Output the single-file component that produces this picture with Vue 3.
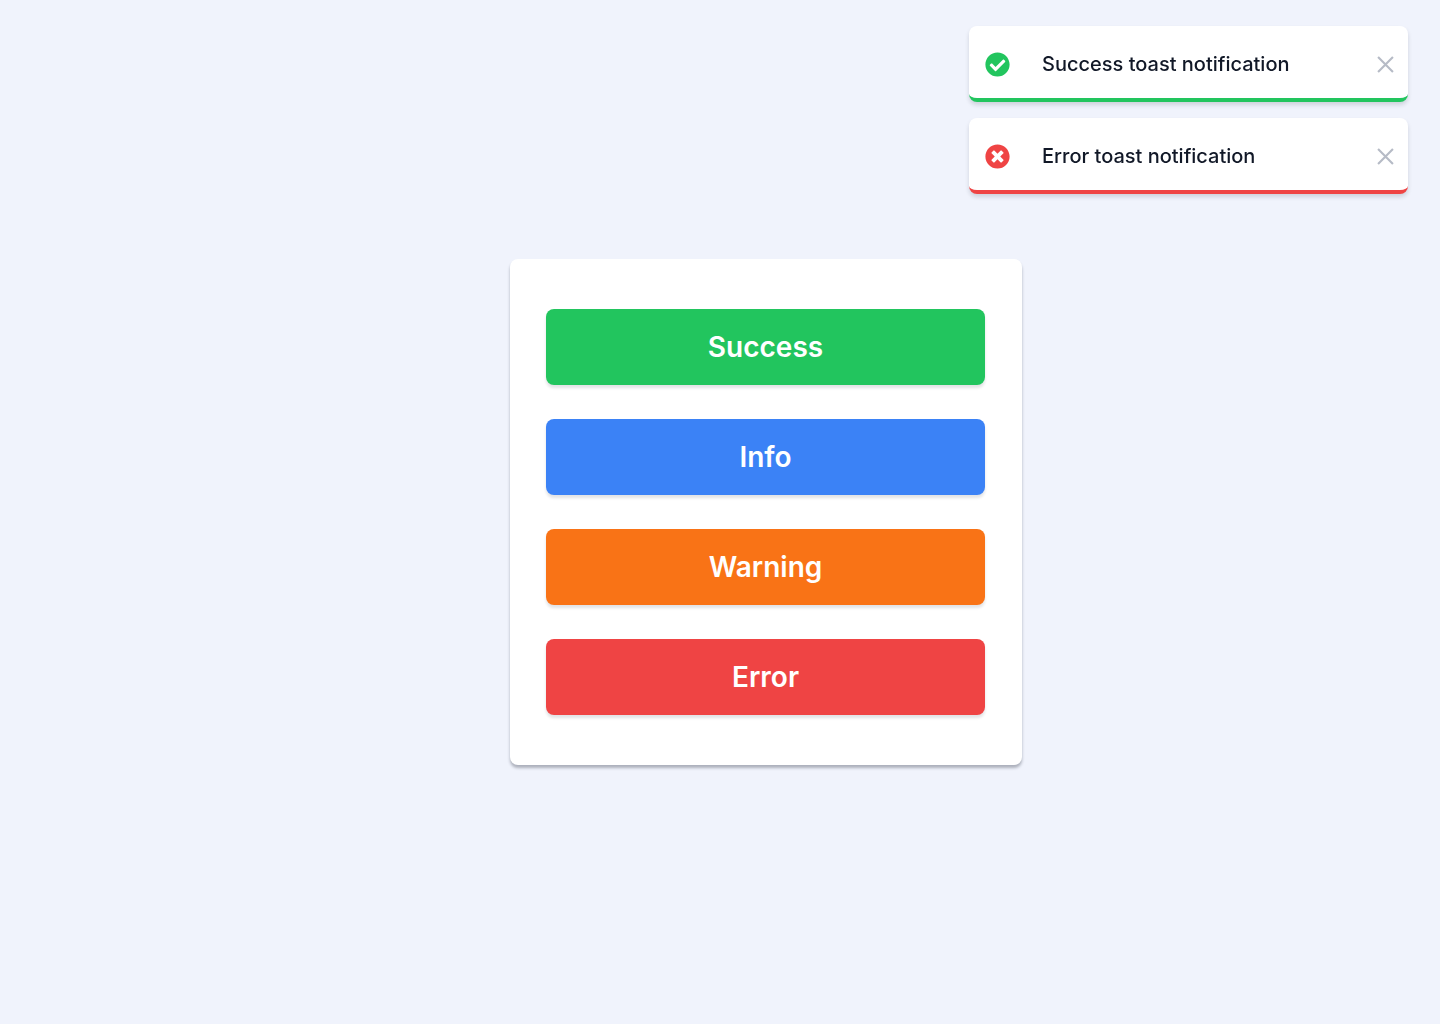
<script setup>
import { ref } from 'vue'

const types = [
  { id: 'success', label: 'Success' },
  { id: 'info', label: 'Info' },
  { id: 'warning', label: 'Warning' },
  { id: 'error', label: 'Error' },
]

let nextId = 3
const toasts = ref([
  { id: 1, type: 'success', text: 'Success toast notification' },
  { id: 2, type: 'error', text: 'Error toast notification' },
])

function addToast(type) {
  toasts.value.push({ id: nextId++, type: type.id, text: `${type.label} toast notification` })
}

function removeToast(id) {
  toasts.value = toasts.value.filter((toast) => toast.id !== id)
}
</script>

<template>
  <main class="page">
    <section class="panel">
      <button
        v-for="type in types"
        :key="type.id"
        type="button"
        class="trigger"
        :class="type.id"
        @click="addToast(type)"
      >
        {{ type.label }}
      </button>
    </section>

    <div class="toasts" role="status">
      <div v-for="toast in toasts" :key="toast.id" class="toast" :class="toast.type">
        <div class="toast-body">
          <svg class="icon" viewBox="0 0 512 512" aria-hidden="true">
            <path
              v-if="toast.type === 'success'"
              d="M504 256c0 136.967-111.033 248-248 248S8 392.967 8 256 119.033 8 256 8s248 111.033 248 248zM227.314 387.314l184-184c6.248-6.248 6.248-16.379 0-22.627l-22.627-22.627c-6.248-6.249-16.379-6.249-22.628 0L216 308.118l-70.059-70.059c-6.248-6.248-16.379-6.248-22.628 0l-22.627 22.627c-6.248 6.248-6.248 16.379 0 22.627l104 104c6.249 6.249 16.379 6.249 22.628.001z"
            />
            <path
              v-else-if="toast.type === 'error'"
              d="M256 8C119 8 8 119 8 256s111 248 248 248 248-111 248-248S393 8 256 8zm121.600 313.100c4.700 4.700 4.700 12.300 0 17L338 377.600c-4.700 4.700-12.300 4.700-17 0L256 312l-65.100 65.600c-4.700 4.700-12.300 4.700-17 0L134.400 338c-4.700-4.700-4.700-12.300 0-17l65.600-65-65.600-65.100c-4.700-4.700-4.700-12.300 0-17l39.600-39.600c4.700-4.700 12.300-4.700 17 0l65 65.700 65.100-65.600c4.700-4.700 12.300-4.700 17 0l39.600 39.600c4.700 4.700 4.700 12.300 0 17L312 256l65.600 65.100z"
            />
            <circle v-else cx="256" cy="256" r="248" />
          </svg>
          <p class="message">{{ toast.text }}</p>
          <button type="button" class="close" aria-label="Dismiss" @click="removeToast(toast.id)">
            <svg viewBox="0 0 16 16" aria-hidden="true">
              <path d="M1 1L15 15M15 1L1 15" />
            </svg>
          </button>
        </div>
      </div>
    </div>
  </main>
</template>

<style>
body {
  margin: 0;
  background: #f0f3fc;
}
</style>

<style scoped>
.page {
  min-height: 100vh;
  box-sizing: border-box;
  padding: 24px 0 24px 92px;
  display: flex;
  align-items: center;
  justify-content: center;
  font-family: Inter, sans-serif;
}

.panel {
  box-sizing: border-box;
  width: 512px;
  max-width: 100%;
  padding: 50px 37px 50px 36px;
  display: flex;
  flex-direction: column;
  gap: 34px;
  background: #fff;
  border-radius: 8px;
  box-shadow: 0 3px 3px rgba(17, 24, 39, 0.3);
}

.trigger {
  height: 76px;
  padding: 0 16px;
  border: 0;
  border-radius: 8px;
  color: #fff;
  font: 600 28px/36px Inter, sans-serif;
  cursor: pointer;
  box-shadow: 0 3px 3px rgba(17, 24, 39, 0.12);
}

.trigger.success { background: #22c55e; }
.trigger.info { background: #3b82f6; }
.trigger.warning { background: #f97316; }
.trigger.error { background: #ef4444; }

.toasts {
  position: fixed;
  top: 26px;
  right: 32px;
  width: 439px;
  max-width: calc(100% - 64px);
  display: flex;
  flex-direction: column;
  gap: 16px;
}

.toast {
  --tone: #3b82f6;
  background: #fff;
  border-bottom: 4px solid var(--tone);
  border-radius: 8px;
  box-shadow: 0 3px 4px rgba(17, 24, 39, 0.15);
}

.toast.success { --tone: #22c55e; }
.toast.warning { --tone: #f97316; }
.toast.error { --tone: #ef4444; }

.toast-body {
  height: 72px;
  box-sizing: border-box;
  padding: 4px 14px 0 16px;
  display: flex;
  align-items: center;
}

.icon {
  width: 25px;
  height: 25px;
  flex: none;
  fill: var(--tone);
}

.message {
  flex: 1;
  margin: 0 16px 0 32px;
  color: #111827;
  font-size: 20px;
  font-weight: 500;
  line-height: 28px;
}

.close {
  width: 17px;
  height: 17px;
  padding: 0;
  border: 0;
  background: none;
  cursor: pointer;
}

.close svg {
  display: block;
  width: 100%;
  height: 100%;
  fill: none;
  stroke: #b6bbc6;
  stroke-width: 2;
}
</style>
